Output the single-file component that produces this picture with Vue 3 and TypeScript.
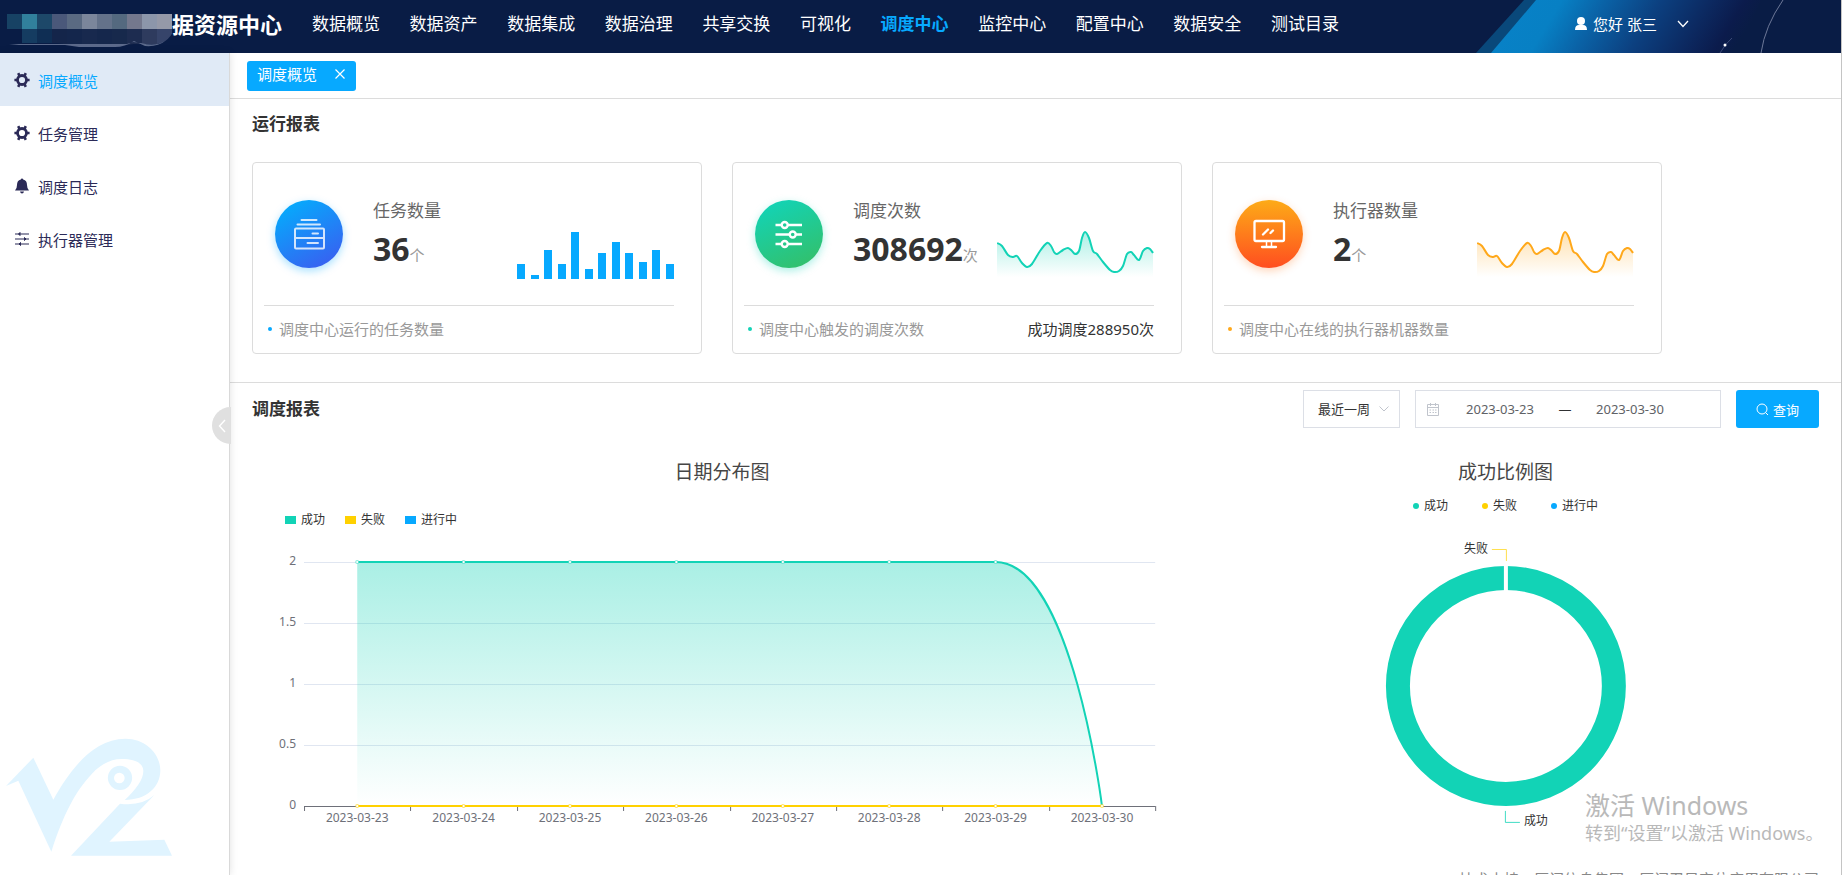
<script setup lang="ts">
import { ref } from 'vue'

interface Point { x: number; y: number }

const navItems = ['数据概览', '数据资产', '数据集成', '数据治理', '共享交换', '可视化', '调度中心', '监控中心', '配置中心', '数据安全', '测试目录']
const activeNav = '调度中心'

const sideItems = [
  { label: '调度概览', icon: 'gear' },
  { label: '任务管理', icon: 'gear' },
  { label: '调度日志', icon: 'bell' },
  { label: '执行器管理', icon: 'sliders' },
]
const activeSide = '调度概览'

const cards = [
  { kind: 'blue', label: '任务数量', value: '36', unit: '个', note: '调度中心运行的任务数量', extra: '', color: '#07a9ff' },
  { kind: 'green', label: '调度次数', value: '308692', unit: '次', note: '调度中心触发的调度次数', extra: '成功调度288950次', color: '#12d3b6' },
  { kind: 'orange', label: '执行器数量', value: '2', unit: '个', note: '调度中心在线的执行器机器数量', extra: '', color: '#ffa81a' },
]

const barHeights = [15, 4, 29, 15, 47, 10, 26, 37, 26, 17, 29, 15]
const bars = barHeights.map((h, i) => ({ x: Math.round((i * 149) / 11), h }))

const trend: Point[] = [
  [0, 13], [5, 16], [11, 25], [16, 27], [20, 26], [25, 33], [30, 37], [35, 34], [43, 21], [50, 13],
  [54, 16], [57, 22], [60, 24], [66, 20], [71, 18], [75, 21], [78, 24], [82, 21], [85, 8], [88, 2],
  [92, 8], [96, 21], [100, 24], [106, 32], [113, 40], [117, 42], [122, 41], [126, 36], [130, 24],
  [134, 22], [137, 25], [142, 30], [146, 21], [150, 18], [153, 19], [156, 23],
].map(([x, y]) => ({ x, y }))

function smooth(points: Point[]): string {
  let d = `M${points[0].x},${points[0].y}`
  for (let i = 0; i < points.length - 1; i++) {
    const p0 = points[i - 1] ?? points[i]
    const p1 = points[i]
    const p2 = points[i + 1]
    const p3 = points[i + 2] ?? p2
    d += ` C${p1.x + (p2.x - p0.x) / 6},${p1.y + (p2.y - p0.y) / 6} ${p2.x - (p3.x - p1.x) / 6},${p2.y - (p3.y - p1.y) / 6} ${p2.x},${p2.y}`
  }
  return d
}
const trendLine = smooth(trend)
const trendArea = `${trendLine} V47 H0 Z`

const series = [
  { name: '成功', color: '#12d3b6' },
  { name: '失败', color: '#ffd100' },
  { name: '进行中', color: '#07a9ff' },
]

const days = ['2023-03-23', '2023-03-24', '2023-03-25', '2023-03-26', '2023-03-27', '2023-03-28', '2023-03-29', '2023-03-30']
const plot = { left: 52, right: 903, top: 34, bottom: 278 }
const band = (plot.right - plot.left) / days.length
const centers = days.map((_, i) => plot.left + band * (i + 0.5))
const ticks = Array.from({ length: days.length + 1 }, (_, i) => Math.round(plot.left + band * i) + 0.5)
const yLabels = ['2', '1.5', '1', '0.5', '0'].map((text, i) => ({ text, y: plot.top + i * 61 }))
const dropFrom = centers[6]
const dropTo = centers[7]
const successLine = `M${centers[0]},${plot.top} H${dropFrom} C${dropFrom + 76},${plot.top} ${dropTo},${plot.bottom} ${dropTo},${plot.bottom}`
const successArea = `${successLine} H${centers[0]} Z`

const mosaicTop = ['#174264', '#31809c', '#1d4869', '#4a587a', '#5a6a82', '#7b869b', '#64728a', '#54697f', '#74788d', '#8c96aa', '#9599a8']
const mosaicLow = ['#091c45', '#153c61', '#0f2e54', '#14254a', '#14264c', '#18294e', '#15274c', '#17294c', '#1d2c50', '#2e3b5e', '#36446a']

const period = ref('week')
const startDate = ref('2023-03-23')
const endDate = ref('2023-03-30')
</script>

<template>
  <div class="page">
    <header class="topbar">
      <svg class="topbar-art" width="365" height="53" viewBox="0 0 365 53" aria-hidden="true">
        <defs>
          <linearGradient id="beam" x1="0" y1="0" x2="1" y2="0.12">
            <stop offset="0" stop-color="#0882c8" />
            <stop offset="0.26" stop-color="#0780c4" />
            <stop offset="0.42" stop-color="#0a62a6" />
            <stop offset="0.62" stop-color="#0c4080" />
            <stop offset="0.8" stop-color="#0c2a62" />
            <stop offset="0.93" stop-color="#0b1b4c" />
            <stop offset="1" stop-color="#091c45" />
          </linearGradient>
        </defs>
        <path d="M48 0H64L17 53H0Z" fill="#09487a" />
        <path d="M60 0H285L262 53H15Z" fill="url(#beam)" />
        <path d="M307 0Q289 26 285 53" fill="none" stroke="#6d7898" />
        <path d="M244 53Q249 44 256 38" fill="none" stroke="#3c4a78" />
        <circle cx="249" cy="45" r="1.500" fill="#fff" />
      </svg>
      <div class="brand">
        <svg class="mosaic" width="168" height="36" viewBox="0 0 168 36" aria-hidden="true">
          <clipPath id="smear"><path d="M0 0H164L168 5V15Q163 30 150 32H127L110 34H70L50 31H0Z" /></clipPath>
          <g clip-path="url(#smear)">
            <rect v-for="(c, i) in mosaicTop" :key="'t' + i" :x="i * 15" y="2" width="15" height="15" :fill="c" />
            <rect v-for="(c, i) in mosaicLow" :key="'l' + i" :x="i * 15" y="17" width="15" height="16" :fill="c" />
          </g>
          <path d="M2 32H120L126 30 134 31Q148 35 158 29 151 35 138 34L127 29Q118 35 108 35H72L58 33H12Z" fill="#5c6a8b" />
        </svg>
        <span class="brand-name">据资源中心</span>
      </div>
      <nav class="nav" aria-label="主导航">
        <a v-for="item in navItems" :key="item" href="#" :class="{ active: item === activeNav }">{{ item }}</a>
      </nav>
      <button class="user" type="button">
        <svg width="12" height="14" viewBox="0 0 12 14" aria-hidden="true">
          <circle cx="6" cy="4" r="4" fill="#fff" />
          <path d="M0 13Q0 8 4 8H8Q12 8 12 13Z" fill="#fff" />
        </svg>
        <span>您好 张三</span>
        <svg class="user-arrow" width="12" height="8" viewBox="0 0 12 8" aria-hidden="true">
          <path d="M1 1L6 6.5L11 1" fill="none" stroke="#fff" stroke-width="1.3" />
        </svg>
      </button>
    </header>

    <div class="body">
      <aside class="sidebar">
        <nav aria-label="侧边导航">
          <a v-for="item in sideItems" :key="item.label" href="#" class="side-item" :class="{ active: item.label === activeSide }">
            <svg width="16" height="16" viewBox="0 0 16 16" aria-hidden="true">
              <template v-if="item.icon === 'gear'">
                <circle cx="8" cy="8" r="4.5" fill="none" stroke="#2b2a57" stroke-width="2.8" />
                <path d="M4.200 1.200 5.600 4M11.800 1.200 10.400 4M4.200 14.800 5.600 12M11.800 14.800 10.400 12M.4 8H3M13 8H15.600" stroke="#2b2a57" stroke-width="2.6" />
              </template>
              <template v-else-if="item.icon === 'bell'">
                <path d="M8 .4Q9 .4 9.2 1.6 13 2.6 13 7 13 10.6 15 12.4H1Q3 10.6 3 7 3 2.6 6.8 1.6 7 .4 8 .4Z" fill="#2b2a57" />
                <path d="M6 13.6H10Q9.6 15.6 8 15.6 6.4 15.6 6 13.6Z" fill="#2b2a57" />
              </template>
              <template v-else>
                <path d="M1 3H15M1 8H15M1 13H15" stroke="#2b2a57" stroke-width="1.2" />
                <path d="M4.500 3 6 1.500V4.500ZM12 8 10.500 6.500V9.500ZM5 13 6.500 11.500V14.500Z" fill="#2b2a57" stroke="#2b2a57" />
              </template>
            </svg>
            <span>{{ item.label }}</span>
          </a>
        </nav>
        <button class="collapse" type="button" aria-label="收起菜单">
          <svg width="8" height="14" viewBox="0 0 8 14" aria-hidden="true">
            <path d="M7 1L1.5 7L7 13" fill="none" stroke="#fff" stroke-width="1.4" />
          </svg>
        </button>
        <svg class="side-logo" width="166" height="118" viewBox="18 116 498 352" aria-hidden="true">
          <g fill="#e0f4ff">
            <path d="M18 259 100 174 160 300C205 220 275 117 376 117 440 117 481 165 481 212 481 262 440 301 374 301 408 270 430 240 430 214 430 190 405 178 365 178 330 178 300 196 276 222 225 276 190 345 154 456L55 243Z" />
            <path d="M360 312Q425 320 463 286L328 426 493 420 516 468H213Z" />
            <path fill-rule="evenodd" d="M360 198A36 36 0 1 1 360 271A36 36 0 1 1 360 198ZM358 219A16 16 0 1 0 358 251A16 16 0 1 0 358 219Z" />
          </g>
        </svg>
      </aside>

      <main class="main">
        <div class="tabs">
          <div class="tab">
            <span>调度概览</span>
            <button type="button" aria-label="关闭">
              <svg width="10" height="10" viewBox="0 0 10 10" aria-hidden="true"><path d="M.5 .5 9.5 9.5M9.5 .5 .5 9.5" stroke="#fff" stroke-width="1.2" /></svg>
            </button>
          </div>
        </div>

        <section class="run">
          <h2>运行报表</h2>
          <div class="cards">
            <article v-for="card in cards" :key="card.label" class="card">
              <div class="card-top">
                <span class="badge" :class="card.kind">
                  <svg width="68" height="68" viewBox="0 0 68 68" fill="none" stroke="#fff" aria-hidden="true">
                    <g v-if="card.kind === 'blue'" stroke-width="2" opacity=".8" stroke-linecap="round">
                      <path d="M26.500 20H41.500M22.500 24.500H45M20 38H49M37.500 33.500H43M32.500 43H43" />
                      <rect x="20" y="28.500" width="29" height="20" rx="1" />
                    </g>
                    <g v-else-if="card.kind === 'green'" stroke-width="2.4">
                      <path d="M20.500 25H26.500M33 25H47M20.500 34.500H34.500M41 34.500H47M20.500 44H26.500M33 44H47" />
                      <circle cx="29.700" cy="25" r="3" /><circle cx="37.700" cy="34.500" r="3" /><circle cx="29.700" cy="44" r="3" />
                    </g>
                    <g v-else stroke-linecap="round">
                      <rect x="19.500" y="21" width="29.500" height="20" rx="1.500" stroke-width="2.3" />
                      <path d="M28 34.500 33 29.500M35.500 33 38 30.500M27 47H41" stroke-width="2.3" />
                      <path d="M31.500 42V46M36.500 42V46" stroke-width="1.5" />
                    </g>
                  </svg>
                </span>
                <div class="stat">
                  <span class="stat-label">{{ card.label }}</span>
                  <span class="stat-value"><strong>{{ card.value }}</strong><small>{{ card.unit }}</small></span>
                </div>
                <svg class="mini" width="157" height="49" viewBox="0 0 157 49" aria-hidden="true">
                  <template v-if="card.kind === 'blue'">
                    <rect v-for="b in bars" :key="b.x" :x="b.x" :y="49 - b.h" width="8" :height="b.h" :fill="card.color" />
                  </template>
                  <template v-else>
                    <linearGradient :id="'fade-' + card.kind" x1="0" y1="0" x2="0" y2="1">
                      <stop offset="0" :stop-color="card.color" stop-opacity=".35" />
                      <stop offset="1" :stop-color="card.color" stop-opacity="0" />
                    </linearGradient>
                    <path :d="trendArea" :fill="`url(#fade-${card.kind})`" />
                    <path :d="trendLine" fill="none" :stroke="card.color" stroke-width="2" />
                  </template>
                </svg>
              </div>
              <div class="card-foot">
                <span class="note" :class="card.kind">{{ card.note }}</span>
                <span v-if="card.extra" class="extra">{{ card.extra }}</span>
              </div>
            </article>
          </div>
        </section>

        <section class="report">
          <div class="report-head">
            <h2>调度报表</h2>
            <form class="filters" @submit.prevent>
              <div class="period">
                <select v-model="period" aria-label="时间范围">
                  <option value="week">最近一周</option>
                </select>
                <svg width="10" height="6" viewBox="0 0 10 6" aria-hidden="true"><path d="M.5 .5 5 5 9.5 .5" fill="none" stroke="#c0c4cc" /></svg>
              </div>
              <div class="range">
                <svg width="12" height="13" viewBox="0 0 12 13" fill="none" stroke="#c0c4cc" aria-hidden="true">
                  <path d="M.5 1.500H11.500V12.500H.5ZM.5 4.500H11.500M3.500 0V3M8.500 0V3M2.500 7H4M5.500 7H7M8 7H9.500M2.500 9.500H4M5.500 9.500H7M8 9.500H9.500" />
                </svg>
                <input v-model="startDate" type="text" aria-label="开始日期">
                <span class="dash">—</span>
                <input v-model="endDate" type="text" aria-label="结束日期">
              </div>
              <button class="query" type="submit">
                <svg width="13" height="13" viewBox="0 0 13 13" fill="none" stroke="#fff" aria-hidden="true"><circle cx="6" cy="6" r="5" /><path d="M9.500 9.500 12 12" /></svg>
                <span>查询</span>
              </button>
            </form>
          </div>

          <div class="charts">
            <figure class="line-chart">
              <figcaption>日期分布图</figcaption>
              <ul class="legend">
                <li v-for="s in series" :key="s.name"><i :style="{ background: s.color }"></i>{{ s.name }}</li>
              </ul>
              <svg class="plot" viewBox="0 0 940 306" role="img" aria-label="日期分布图">
                <linearGradient id="success-fill" x1="0" y1="0" x2="0" y2="1">
                  <stop offset="0" stop-color="#12d3b6" stop-opacity=".36" />
                  <stop offset="1" stop-color="#12d3b6" stop-opacity="0" />
                </linearGradient>
                <g v-for="l in yLabels" :key="l.text">
                  <path v-if="l.text !== '0'" :d="`M${plot.left},${l.y + 0.5}H${plot.right}`" stroke="#e0e6f1" />
                  <text x="44" :y="l.y + 3" text-anchor="end">{{ l.text }}</text>
                </g>
                <path :d="`M${plot.left},${plot.bottom + 0.5}H${plot.right}`" stroke="#6e7079" />
                <path v-for="t in ticks" :key="t" :d="`M${t},${plot.bottom}v5`" stroke="#6e7079" />
                <text v-for="(d, i) in days" :key="d" :x="centers[i]" y="294" text-anchor="middle">{{ d }}</text>
                <path :d="successArea" fill="url(#success-fill)" />
                <path :d="successLine" fill="none" stroke="#12d3b6" stroke-width="2" />
                <path :d="`M${centers[0]},${plot.bottom}H${centers[7]}`" stroke="#ffd100" stroke-width="2" />
                <g v-for="(c, i) in centers" :key="c" fill="#fff">
                  <circle v-if="i < 7" :cx="c" :cy="plot.top" r="1.500" stroke="#12d3b6" stroke-opacity=".5" />
                  <circle :cx="c" :cy="plot.bottom" r="1.500" stroke="#ffd100" stroke-opacity=".6" />
                </g>
              </svg>
            </figure>

            <figure class="pie-chart">
              <figcaption>成功比例图</figcaption>
              <ul class="legend">
                <li v-for="s in series" :key="s.name"><i :style="{ background: s.color }"></i>{{ s.name }}</li>
              </ul>
              <svg class="plot" viewBox="0 0 627 321" role="img" aria-label="成功比例图">
                <circle cx="314" cy="172" r="108" fill="none" stroke="#12d3b6" stroke-width="24" />
                <path d="M314 50V78" stroke="#fff" stroke-width="4" />
                <path d="M300 35.500H314.500V47" fill="none" stroke="#ffd100" stroke-opacity=".7" />
                <path d="M313.500 297V308.500H328" fill="none" stroke="#12d3b6" stroke-opacity=".8" />
                <text class="slice" x="296" y="39" text-anchor="end">失败</text>
                <text class="slice" x="332" y="311">成功</text>
              </svg>
            </figure>
          </div>
        </section>

        <footer class="support">技术支持：厦门信息集团、厦门卫星定位应用有限公司</footer>
      </main>
    </div>

    <div class="activation">
      <p class="activation-title">激活 Windows</p>
      <p>转到“设置”以激活 Windows。</p>
    </div>
  </div>
</template>

<style>
body {
  margin: 0;
}
</style>

<style scoped>
.page,
.page * {
  box-sizing: border-box;
}

.page {
  position: relative;
  display: flex;
  flex-direction: column;
  height: 100vh;
  margin-right: 1px;
  overflow: hidden;
  border-right: 1px solid #c4c4c4;
  background: #fff;
  color: #333;
  font-family: "Noto Sans", "Noto Sans CJK SC", sans-serif;
  font-size: 15px;
}

a {
  color: inherit;
  text-decoration: none;
}

button,
input,
select {
  margin: 0;
  padding: 0;
  border: 0;
  background: none;
  color: inherit;
  font: inherit;
}

h2,
p,
ul,
figure {
  margin: 0;
  padding: 0;
}

/* Top bar */
.topbar {
  position: relative;
  display: flex;
  flex: none;
  align-items: center;
  height: 53px;
  padding-bottom: 6px;
  background: #091c45;
  color: #fff;
}

.topbar-art {
  position: absolute;
  top: 0;
  right: 0;
}

.brand {
  display: flex;
  align-items: center;
  justify-content: flex-end;
  flex: none;
  position: relative;
  width: 282px;
}

.mosaic {
  position: absolute;
  left: 7px;
  top: 4px;
}

.brand-name {
  font-size: 22px;
  font-weight: 700;
  line-height: 32px;
}

.nav {
  display: flex;
  justify-content: space-between;
  flex: 0 1 1027px;
  margin-left: 30px;
  font-size: 17px;
  line-height: 24px;
  white-space: nowrap;
}

.nav .active {
  color: #07a9ff;
  font-weight: 700;
}

.user {
  position: relative;
  display: flex;
  align-items: center;
  gap: 6px;
  margin-left: auto;
  margin-right: 152px;
  line-height: 20px;
  white-space: nowrap;
}

.user-arrow {
  margin-left: 14px;
}

/* Side menu */
.body {
  display: flex;
  flex: 1;
  min-height: 0;
}

.sidebar {
  position: relative;
  z-index: 1;
  flex: none;
  width: 230px;
  border-right: 1px solid #d9d9d9;
  background: #fff;
  box-shadow: 0 0 8px rgba(0, 0, 0, 0.12);
}

.side-item {
  display: flex;
  align-items: center;
  gap: 8px;
  height: 53px;
  padding: 2px 14px 0;
  color: #2b2a57;
  line-height: 20px;
}

.side-item svg {
  margin-bottom: 2px;
}

.side-item.active {
  background: #e0eaf6;
  color: #07a9ff;
}

.collapse {
  position: absolute;
  top: 354px;
  right: -2px;
  display: flex;
  align-items: center;
  width: 19px;
  height: 37px;
  padding-left: 6px;
  border-radius: 19px 0 0 19px;
  background: #e0e0e0;
}

.side-logo {
  position: absolute;
  bottom: 19px;
  left: 6px;
}

/* Content */
.main {
  flex: 1;
  min-width: 0;
}

.tabs {
  display: flex;
  height: 46px;
  padding: 8px 17px 0;
  border-bottom: 1px solid #dcdcdc;
}

.tab {
  display: flex;
  align-items: center;
  gap: 18px;
  height: 30px;
  padding: 0 11px 4px 10px;
  border-radius: 3px;
  background: #07a9ff;
  color: #fff;
  line-height: 20px;
}

.tab button {
  display: flex;
}

h2 {
  font-size: 17px;
  font-weight: 700;
  line-height: 24px;
}

.run {
  padding: 13px 22px 28px;
  border-bottom: 1px solid #dcdcdc;
}

.cards {
  display: flex;
  gap: 30px;
  margin-top: 26px;
}

.card {
  flex: 0 1 450px;
  height: 192px;
  padding: 0 27px 0 11px;
  border: 1px solid #dcdcdc;
  border-radius: 4px;
}

.card-top {
  display: flex;
  align-items: center;
  height: 143px;
  padding-left: 11px;
  border-bottom: 1px solid #dcdcdc;
}

.badge {
  flex: none;
  width: 68px;
  height: 68px;
  border-radius: 50%;
}

.badge.blue {
  background: linear-gradient(150deg, #05abfc 10%, #3b5cf0 95%);
  box-shadow: 0 3px 8px rgba(7, 169, 255, 0.35);
}

.badge.green {
  background: linear-gradient(155deg, #13d3b5 10%, #34bf68 95%);
  box-shadow: 0 3px 8px rgba(18, 211, 182, 0.35);
}

.badge.orange {
  background: linear-gradient(180deg, #fdab17, #ff4e20);
  box-shadow: 0 3px 8px rgba(255, 120, 30, 0.3);
}

.stat {
  display: flex;
  flex-direction: column;
  gap: 6px;
  margin-left: 30px;
  white-space: nowrap;
}

.stat-label {
  color: #666;
  font-size: 17px;
  line-height: 24px;
}

.stat-value {
  height: 40px;
  line-height: 40px;
}

.stat-value strong {
  font-size: 32px;
  font-weight: 700;
}

.stat-value small {
  color: #999;
  font-size: 15px;
}

.mini {
  flex: none;
  align-self: flex-end;
  margin-bottom: 26px;
  margin-left: auto;
}

.card-foot {
  display: flex;
  justify-content: space-between;
  padding: 13px 0 0 4px;
  line-height: 20px;
  white-space: nowrap;
}

.note {
  display: flex;
  align-items: center;
  gap: 7px;
  color: #999;
}

.note::before {
  width: 4px;
  height: 4px;
  border-radius: 50%;
  background: #07a9ff;
  content: "";
}

.note.green::before {
  background: #12d3b6;
}

.note.orange::before {
  background: #ffa81a;
}

/* Report */
.report {
  padding: 7px 22px 0;
}

.report-head {
  display: flex;
  align-items: center;
  justify-content: space-between;
}

.filters {
  display: flex;
  gap: 15px;
  font-size: 13px;
}

.period {
  position: relative;
  display: flex;
  align-items: center;
}

.period select {
  width: 97px;
  height: 38px;
  padding-left: 14px;
  border: 1px solid #dcdfe6;
  appearance: none;
}

.period svg {
  position: absolute;
  right: 11px;
  pointer-events: none;
}

.range {
  display: flex;
  align-items: center;
  width: 306px;
  height: 38px;
  padding-left: 11px;
  border: 1px solid #dcdfe6;
  color: #606266;
}

.range input {
  width: 104px;
  text-align: center;
}

.range svg + input {
  margin-left: 9px;
}

.dash {
  width: 26px;
  color: #303133;
  text-align: center;
}

.query {
  display: flex;
  align-items: center;
  justify-content: center;
  gap: 4px;
  width: 83px;
  height: 38px;
  border-radius: 3px;
  background: #07a9ff;
  color: #fff;
}

.charts {
  display: grid;
  grid-template-columns: 3fr 2fr;
  padding-top: 32px;
}

figcaption {
  color: #464646;
  font-size: 19px;
  line-height: 24px;
  text-align: center;
}

.legend {
  display: flex;
  color: #333;
  font-size: 12px;
  line-height: 16px;
  list-style: none;
}

.legend li {
  display: flex;
  align-items: center;
  gap: 5px;
}

.line-chart .legend {
  gap: 20px;
  margin-top: 28px;
  padding-left: 33px;
}

.line-chart .legend i {
  width: 11px;
  height: 8px;
}

.pie-chart .legend {
  gap: 34px;
  justify-content: center;
  margin-top: 14px;
}

.pie-chart .legend i {
  width: 6px;
  height: 6px;
  border-radius: 50%;
}

.plot {
  display: block;
  width: 100%;
  fill: #6e7079;
  font-size: 12px;
}

.slice {
  fill: #333;
}

.support {
  padding: 34px 22px 0;
  color: #888;
  line-height: 20px;
  text-align: right;
}

.activation {
  position: absolute;
  bottom: 30px;
  right: 20px;
  width: 236px;
  color: #b9b9b9;
  font-size: 18px;
  line-height: 24px;
  white-space: nowrap;
  pointer-events: none;
}

.activation-title {
  font-size: 25px;
  line-height: 32px;
}
</style>
